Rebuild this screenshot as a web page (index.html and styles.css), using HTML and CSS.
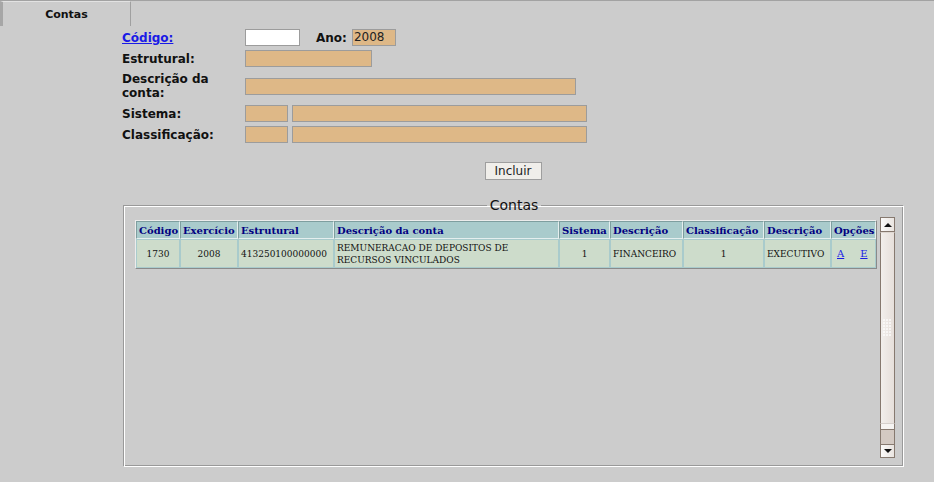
FILE: index.html
```html
<!DOCTYPE html>
<html lang="pt">
<head>
<meta charset="utf-8">
<title>Contas</title>
<link rel="stylesheet" href="styles.css">
</head>
<body>
<div class="tabs"><div class="tab">Contas</div></div>
<div class="main">
  <div class="form">
    <a class="lbl link" href="#">Código:</a>
    <div class="fld">
      <span class="inp white w55"></span>
      <span class="lbl ano">Ano:</span>
      <span class="inp w44">2008</span>
    </div>
    <span class="lbl">Estrutural:</span>
    <div class="fld"><span class="inp w127"></span></div>
    <span class="lbl">Descrição da<br>conta:</span>
    <div class="fld"><span class="inp w331"></span></div>
    <span class="lbl">Sistema:</span>
    <div class="fld"><span class="inp w43"></span><span class="inp w295"></span></div>
    <span class="lbl">Classificação:</span>
    <div class="fld"><span class="inp w43"></span><span class="inp w295"></span></div>
  </div>
  <div class="btnrow"><button class="btn" type="button">Incluir</button></div>
  <fieldset class="box">
    <legend class="legend">Contas</legend>
    <div class="scroller">
      <div class="area">
        <table class="grid">
          <colgroup>
            <col class="c1"><col class="c2"><col class="c3"><col class="c4"><col class="c5"><col class="c6"><col class="c7"><col class="c8"><col class="c9">
          </colgroup>
          <thead>
            <tr>
              <th>Código</th><th>Exercício</th><th>Estrutural</th><th>Descrição da conta</th><th>Sistema</th><th>Descrição</th><th>Classificação</th><th>Descrição</th><th>Opções</th>
            </tr>
          </thead>
          <tbody>
            <tr>
              <td class="ctr">1730</td>
              <td class="ctr">2008</td>
              <td>413250100000000</td>
              <td>REMUNERACAO DE DEPOSITOS DE<br>RECURSOS VINCULADOS</td>
              <td class="ctr">1</td>
              <td>FINANCEIRO</td>
              <td class="ctr">1</td>
              <td>EXECUTIVO</td>
              <td class="opts"><a href="#">A</a><a href="#">E</a></td>
            </tr>
          </tbody>
        </table>
      </div>
      <div class="sbar">
        <div class="sbtn up"><span class="tri-up"></span></div>
        <div class="thumb"><span class="grip"></span></div>
        <div class="gap"></div>
        <div class="track"></div>
        <div class="sbtn down"><span class="tri-down"></span></div>
      </div>
    </div>
  </fieldset>
</div>
</body>
</html>
```

FILE: styles.css
```css
html, body {
  margin: 0;
  padding: 0;
  background: #cccccc;
  font-family: "DejaVu Sans", Verdana, sans-serif;
  color: #111;
}
.tabs {
  border-top: 1px solid #a2a2a2;
  height: 25px;
  display: flex;
}
.tab {
  width: 127px;
  height: 24px;
  border-left: 3px solid #a6a6a6;
  border-right: 1px solid #a0a0a0;
  border-top: 1px solid #e2e2e2;
  font-weight: bold;
  font-size: 11px;
  line-height: 25px;
  text-align: center;
  color: #111;
}
.main {
  margin-left: 122px;
  width: 782px;
  padding-top: 3px;
}
.form {
  display: grid;
  grid-template-columns: 123px auto;
  grid-template-rows: 17px 17px 30px 17px 17px;
  row-gap: 4px;
  align-items: center;
}
.lbl {
  font-weight: bold;
  font-size: 12px;
  line-height: 14px;
  color: #111;
}
.link {
  color: #1a1ae6;
  text-decoration: underline;
}
.fld {
  display: flex;
  align-items: center;
  gap: 4px;
}
.ano {
  margin-left: 12px;
  margin-right: 1px;
}
.inp {
  display: block;
  box-sizing: border-box;
  height: 17px;
  background: #deb887;
  border: 1px solid #9c9c9c;
  font-size: 12px;
  line-height: 15px;
  padding-left: 1px;
  color: #222;
}
.white { background: #ffffff; }
.w55 { width: 55px; }
.w44 { width: 44px; }
.w127 { width: 127px; }
.w331 { width: 331px; }
.w43 { width: 43px; }
.w295 { width: 295px; }
.btnrow {
  display: flex;
  justify-content: center;
  margin-top: 19px;
}
.btn {
  box-sizing: border-box;
  width: 57px;
  height: 18px;
  margin: 0;
  padding: 0;
  background: #f0eeea;
  border: 1px solid #9e9e9e;
  font-family: "DejaVu Sans", Verdana, sans-serif;
  font-size: 12px;
  line-height: 15px;
  color: #222;
}
.box {
  margin: 17px 0 0 1px;
  width: 781px;
  box-sizing: border-box;
  padding: 3px 8px 8px 9px;
  border-style: solid;
  border-width: 1px;
  border-color: #999 #fff #fff #999;
  box-shadow: inset 1px 1px 0 #fff, inset -1px -1px 0 #999;
}
.legend {
  margin: 0 auto;
  padding: 0 3px;
  font-size: 14px;
  line-height: 17px;
  color: #111;
}
.scroller {
  display: flex;
  height: 241px;
}
.area {
  flex: 1;
  padding: 3px 0 0 2px;
}
.grid {
  table-layout: fixed;
  width: 741px;
  border-collapse: separate;
  border-spacing: 0;
  border-style: solid;
  border-width: 1px;
  border-color: #ececec #8a8a8a #8a8a8a #ececec;
  font-family: "DejaVu Serif", "Liberation Serif", serif;
}
.c1 { width: 44px; }
.c2 { width: 58px; }
.c3 { width: 96px; }
.c4 { width: 225px; }
.c5 { width: 51px; }
.c6 { width: 73px; }
.c7 { width: 81px; }
.c8 { width: 67px; }
.c9 { width: 45px; }
.grid th {
  height: 16px;
  padding: 0 0 0 2px;
  background: #a9cbcc;
  color: #000080;
  font-size: 10px;
  font-weight: bold;
  text-align: left;
  white-space: nowrap;
  overflow: hidden;
  border-style: solid;
  border-width: 1px;
  border-color: #7e9e9f #e4eeee #e4eeee #7e9e9f;
}
.grid td {
  height: 27px;
  padding: 0 0 0 2px;
  background: #cddccb;
  color: #111;
  font-size: 9px;
  line-height: 12px;
  white-space: nowrap;
  overflow: hidden;
  border: 1px solid #a9cbcc;
}
.grid td.ctr { text-align: center; padding: 0; }
.grid td.opts {
  background: #cddccb;
  padding-left: 5px;
  font-size: 10px;
}
.opts a {
  color: #1a1ae6;
  text-decoration: underline;
  margin-right: 16px;
}
.sbar {
  width: 15px;
  display: flex;
  flex-direction: column;
  box-sizing: border-box;
}
.sbtn {
  box-sizing: border-box;
  width: 15px;
  height: 15px;
  background: linear-gradient(to right, #fbfaf9, #e9e4e0);
  border: 1px solid #86796f;
  display: flex;
  align-items: center;
  justify-content: center;
}
.down { height: 14px; }
.tri-up {
  width: 0;
  height: 0;
  border-left: 4px solid transparent;
  border-right: 4px solid transparent;
  border-bottom: 4px solid #111;
}
.tri-down {
  width: 0;
  height: 0;
  border-left: 4px solid transparent;
  border-right: 4px solid transparent;
  border-top: 4px solid #111;
}
.thumb {
  box-sizing: border-box;
  height: 191px;
  background: linear-gradient(to right, #f2efec, #e6dfda);
  border-left: 1px solid #86796f;
  border-right: 1px solid #86796f;
  border-top: 1px solid #ddd6d0;
  display: flex;
  align-items: center;
  justify-content: center;
}
.grip {
  width: 9px;
  height: 18px;
  background-image: radial-gradient(circle at 1px 1px, #ffffff 0.6px, transparent 0.9px);
  background-size: 3px 3px;
}
.gap {
  box-sizing: border-box;
  height: 6px;
  background: #f6f4f2;
  border-left: 1px solid #86796f;
  border-right: 1px solid #86796f;
  border-top: 1px solid #d6d0cc;
}
.track {
  box-sizing: border-box;
  height: 15px;
  background: #d3c9c2;
  border: 1px solid #86796f;
  border-bottom: none;
}
```
